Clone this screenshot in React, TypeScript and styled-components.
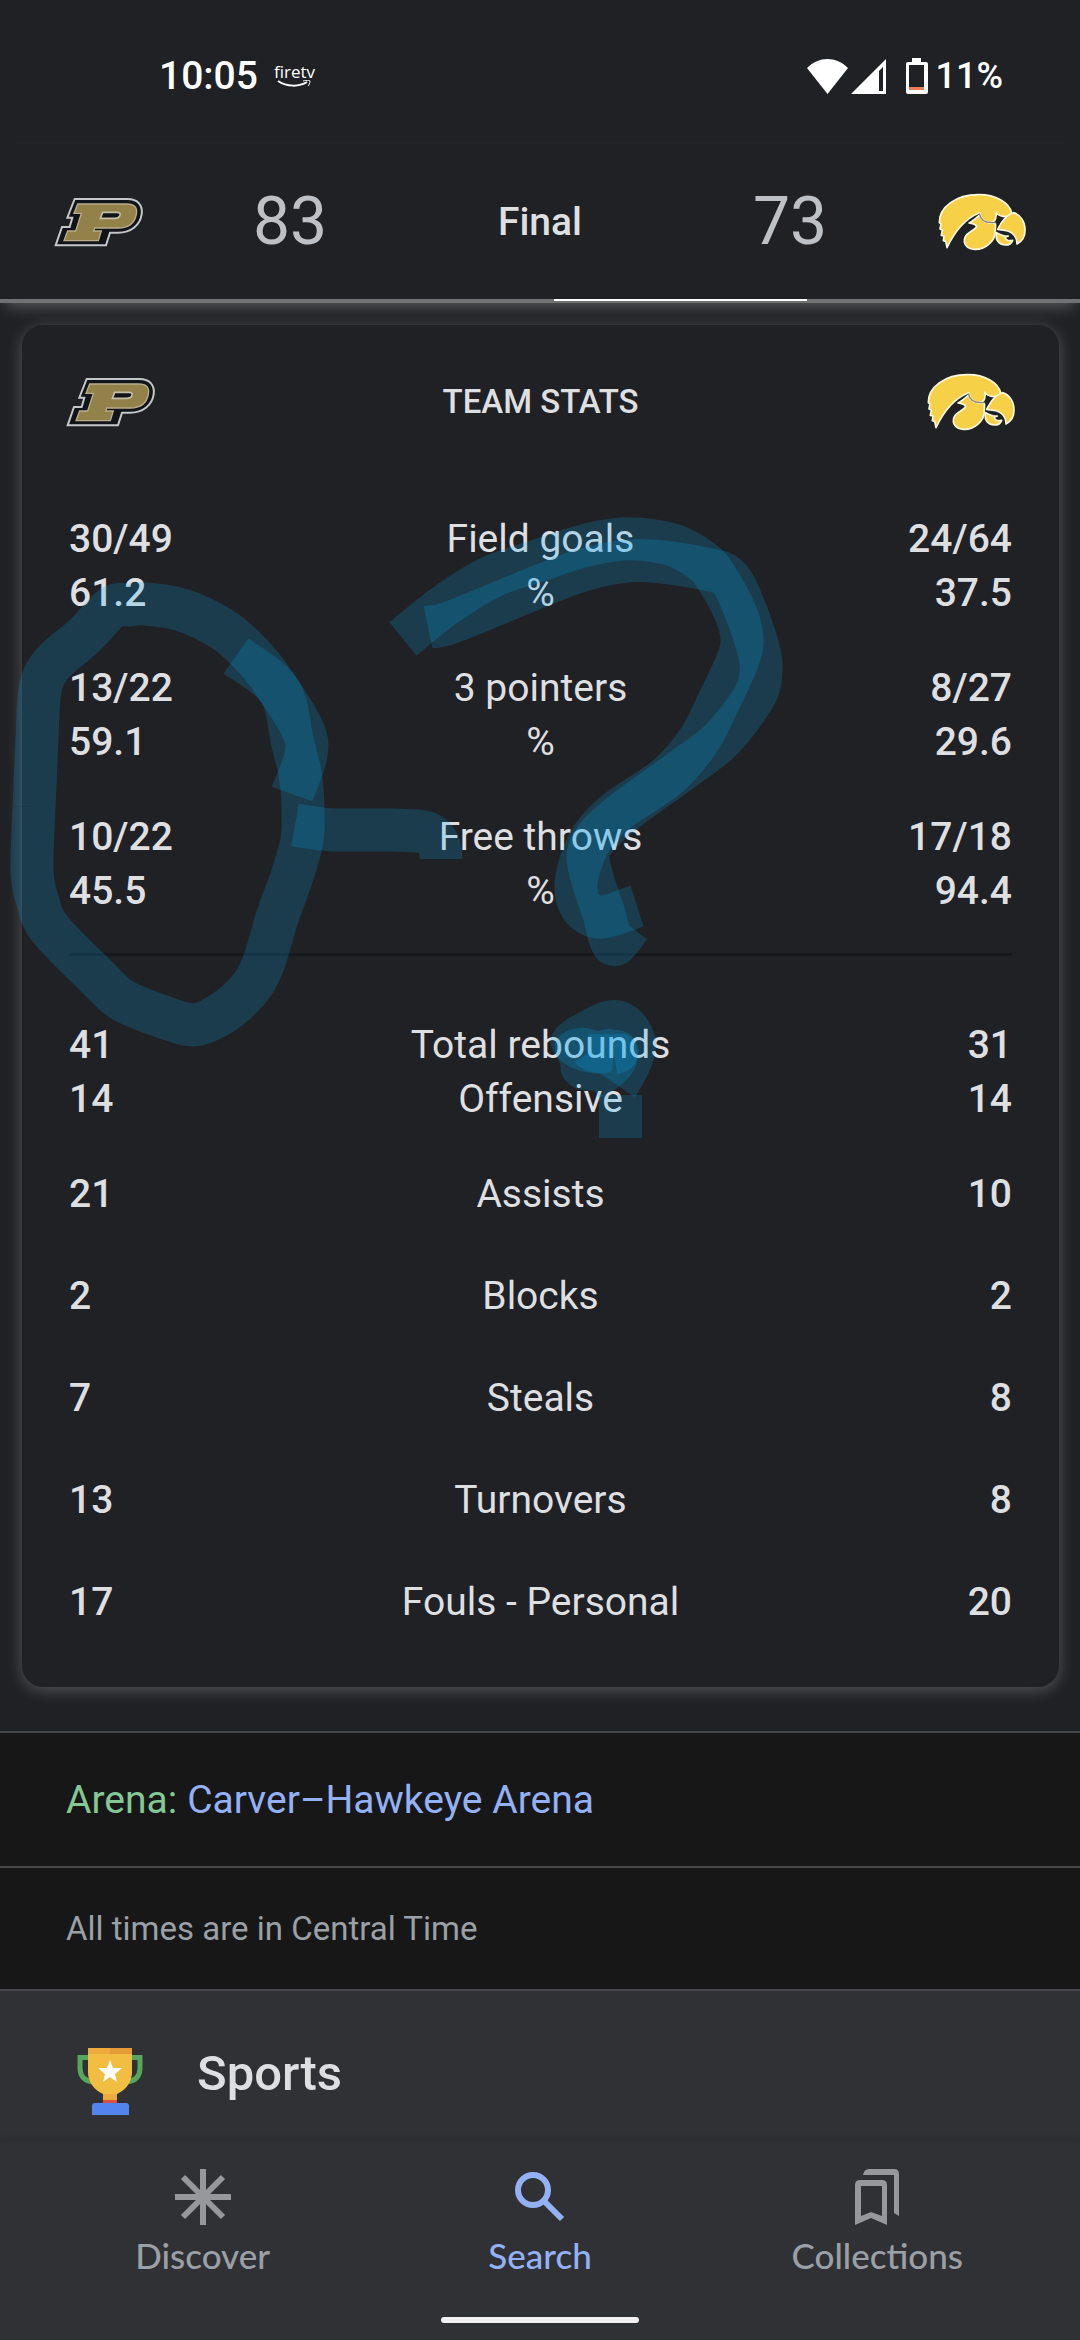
import styled, { createGlobalStyle } from "styled-components";

const colors = {
  background: '#202124',
  surface: '#303134',
  panel: '#171717',
  line: '#48484b',
  divider: '#17181c',
  text: '#dedfe1',
  textScore: '#bdc1c6',
  textMuted: '#9aa0a6',
  link: '#94b1f5',
  label: '#84c995',
  marker: '#03a9f4',
};

type Stat = { home: string[]; name: string[]; away: string[] };

const shooting: Stat[] = [
  { home: ['30/49', '61.2'], name: ['Field goals', '%'], away: ['24/64', '37.5'] },
  { home: ['13/22', '59.1'], name: ['3 pointers', '%'], away: ['8/27', '29.6'] },
  { home: ['10/22', '45.5'], name: ['Free throws', '%'], away: ['17/18', '94.4'] },
];

const totals: Stat[] = [
  { home: ['41', '14'], name: ['Total rebounds', 'Offensive'], away: ['31', '14'] },
  { home: ['21'], name: ['Assists'], away: ['10'] },
  { home: ['2'], name: ['Blocks'], away: ['2'] },
  { home: ['7'], name: ['Steals'], away: ['8'] },
  { home: ['13'], name: ['Turnovers'], away: ['8'] },
  { home: ['17'], name: ['Fouls - Personal'], away: ['20'] },
];

// Marker strokes, as lists of points
type Point = [number, number];

const strokes: Point[][] = [
  // circle, first half
  [[236, 656], [271, 681], [285, 703], [292, 740], [300, 773], [303, 806], [302, 840], [292, 876], [277, 918], [265, 959], [253, 984], [232, 1006], [210, 1020], [193, 1025], [172, 1020], [124, 1001], [97, 977], [50, 929], [38, 902], [32, 872], [34, 807]],
  // circle, second half
  [[34, 807], [37, 740], [40, 690], [52, 664], [84, 636], [112, 607], [128, 605], [146, 604], [182, 610], [222, 629], [250, 653], [272, 680], [302, 728], [306, 755], [292, 794]],
  // question mark
  [[403, 639], [444, 606], [491, 577], [540, 560], [583, 546], [622, 539], [648, 540], [676, 546], [702, 561], [716, 577], [736, 614], [742, 640], [737, 662], [718, 703], [699, 740], [668, 776], [617, 811], [593, 836], [580, 865], [576, 890], [583, 909], [602, 917], [637, 906]],
  [[428, 627], [452, 622], [540, 586], [580, 571], [619, 562], [652, 561], [706, 569], [728, 577], [742, 602], [758, 648], [761, 672], [754, 697], [722, 739], [686, 767], [624, 812], [596, 838], [588, 857], [594, 884], [604, 914], [610, 938], [616, 944], [630, 926]],
];

// Smooth curve that passes through each of the points
function toPath(points: Point[]) {
  let d = `M${points[0][0]} ${points[0][1]}`;
  for (let i = 0; i < points.length - 1; i++) {
    const p0 = points[i - 1] ?? points[i];
    const p1 = points[i];
    const p2 = points[i + 1];
    const p3 = points[i + 2] ?? p2;
    d += `C${p1[0] + (p2[0] - p0[0]) / 6} ${p1[1] + (p2[1] - p0[1]) / 6}`;
    d += ` ${p2[0] - (p3[0] - p1[0]) / 6} ${p2[1] - (p3[1] - p1[1]) / 6} ${p2[0]} ${p2[1]}`;
  }
  return d;
}

function PurdueLogo() {
  return (
    <svg width='96' height='88' viewBox='36 -6 288 264' role='img' aria-label='Purdue'>
      <path d='M110 57H268C300 57 315 76 311 103C306 135 280 158 240 158H216L204 196H53L72 141H95L103 113H88Z' fill='#111418' stroke='#c3c7c9' strokeWidth='6' />
      <path d='M119 72H266C290 72 299 83 295 103C290 130 272 144 240 144H170L167 153H190L181 182H78L89 153H113L130 100H108Z' fill='#92824a' stroke='#b9ad8b' strokeWidth='4' />
      <path d='M194 97H236C247 97 248 102 245 108C243 113 239 115 231 115H187Z' fill='#111418' stroke='#c6bfa8' strokeWidth='5' />
    </svg>
  );
}

function IowaLogo() {
  return (
    <svg width='96' height='88' viewBox='39 -6 288 264' role='img' aria-label='Iowa'>
      <g fill='#f6d148' stroke='#fdf8e0' strokeWidth='5' strokeLinejoin='round'>
        <path d='M78 203L74 184L67 182L69 168L61 166L64 150L57 147L60 132L55 128C54 82 104 44 172 44C224 43 264 68 272 98C270 106 258 111 246 109C236 108 229 104 225 96C227 111 223 122 216 126C201 131 181 124 176 98C130 116 102 152 78 203Z' />
        <path d='M144 129C156 124 166 114 175 106C181 125 200 131 223 129C226 141 221 147 223 157C221 184 193 209 161 208C137 207 125 190 132 172C139 156 158 153 166 142C168 134 158 132 144 129Z' />
        <path d='M230 148C240 126 254 106 277 98C299 104 313 126 312 152C312 171 301 185 288 192C288 172 276 155 252 151Z' />
        <path d='M227 158C222 178 232 195 254 195C264 195 272 189 275 181C262 184 255 180 253 172L262 168C250 170 238 164 227 158Z' />
      </g>
      <path d='M175 100C179 124 196 131 226 127' fill='none' stroke='#858574' strokeWidth='4' />
      <path d='M227 109C233 115 239 114 247 113C242 121 238 126 235 134C231 130 226 130 223 129C229 124 228 117 227 109Z' fill='#202124' />
    </svg>
  );
}

function StatRow({ stat }: { stat: Stat }) {
  const single = stat.name.length === 1;
  return (
    <tr>
      <ValueCell $single={single}>
        {stat.home.map((line, i) => <Line key={i}>{line}</Line>)}
      </ValueCell>
      <NameCell scope='row' $single={single}>
        {stat.name.map((line, i) => <Line key={i}>{line}</Line>)}
      </NameCell>
      <ValueCell $single={single} $right>
        {stat.away.map((line, i) => <Line key={i}>{line}</Line>)}
      </ValueCell>
    </tr>
  );
}

export default function App() {
  return (
    <Page>
      <GlobalStyle />

      {/* Status bar */}
      <StatusBar>
        <Clock>10:05</Clock>
        <FireTv>
          firetv
          <svg width='34' height='8' viewBox='0 0 34 8'>
            <path d='M1 1C10 7 22 7 30 2' fill='none' stroke='#fff' strokeWidth='2' />
            <path d='M26 1C30 0 33 0 33 1C33 3 32 5 31 6' fill='none' stroke='#fff' strokeWidth='1' />
          </svg>
        </FireTv>
        <StatusIcons>
          <svg width='41' height='35' viewBox='0 0 41 35'>
            <path d='M0 9C12-3 29-3 41 9L20.5 35Z' fill='#fff' />
          </svg>
          <svg width='35' height='35' viewBox='0 0 35 35'>
            <path fillRule='evenodd' d='M35 0V35H0ZM32 8L28 12V32H32Z' fill='#fff' />
          </svg>
        </StatusIcons>
        <Battery>
          <svg width='22' height='36' viewBox='0 0 22 36'>
            <path fillRule='evenodd' d='M6 0H15V4H20Q22 4 22 6V34Q22 36 20 36H2Q0 36 0 34V6Q0 4 2 4H6ZM3 7V32H18V7Z' fill='#fff' />
            <path d='M3 29H18V32H3Z' fill='#ee7e59' />
          </svg>
          <BatteryLevel>11%</BatteryLevel>
        </Battery>
      </StatusBar>

      {/* Score */}
      <ScoreHeader>
        <PurdueLogo />
        <Score>83</Score>
        <GameState>Final</GameState>
        <Score>73</Score>
        <IowaLogo />
        <TabIndicator />
      </ScoreHeader>

      {/* Team stats */}
      <Card>
        <CardHeader>
          <PurdueLogo />
          <CardTitle>TEAM STATS</CardTitle>
          <IowaLogo />
        </CardHeader>
        <StatTable>
          <tbody>
            {shooting.map((stat) => <StatRow key={stat.name[0]} stat={stat} />)}
          </tbody>
        </StatTable>
        <Divider />
        <StatTable>
          <tbody>
            {totals.map((stat) => <StatRow key={stat.name[0]} stat={stat} />)}
          </tbody>
        </StatTable>
      </Card>

      {/* Arena and time zone */}
      <ArenaRow>
        <ArenaLabel>Arena:</ArenaLabel>
        <ArenaLink href='#arena'>Carver–Hawkeye Arena</ArenaLink>
      </ArenaRow>
      <TimeZoneRow>All times are in Central Time</TimeZoneRow>

      <SportsRow>
        <svg width='66' height='82' viewBox='0 -15 66 82'>
          <path d='M12 9.500H3V20C3 29 8 33 16 34M54 9.500H63V20C63 29 58 33 50 34' fill='none' stroke='#58a55c' strokeWidth='5' />
          <path d='M11 0H55V24C55 34 49 42 40 46H26C17 42 11 34 11 24Z' fill='#f2be42' />
          <path d='M11 0H33V6H11Z' fill='#eeab3c' />
          <path d='M33 0H55V6H33Z' fill='#e69a38' />
          <path d='M26 46H40V52H26Z' fill='#ecab3d' />
          <path d='M26 52H40V55H26Z' fill='#d85140' />
          <path d='M15 67V58Q15 55 18 55H49Q52 55 52 58V67Z' fill='#5383ec' />
          <path d='M33 12L36 20H45L38 26L40 34L33 29L26 34L28 26L21 20H30Z' fill='#fff' />
        </svg>
        <SportsTitle>Sports</SportsTitle>
      </SportsRow>

      {/* Bottom navigation */}
      <BottomNav>
        <NavButton>
          <svg width='56' height='56' viewBox='0 0 56 56'>
            <path d='M28 0V56M0 28H56M8 8L48 48M48 8L8 48' stroke='#96989c' strokeWidth='6' />
          </svg>
          Discover
        </NavButton>
        <NavButton $active>
          <svg width='56' height='56' viewBox='0 0 56 56'>
            <circle cx='21' cy='21' r='15' fill='none' stroke={colors.link} strokeWidth='6' />
            <path d='M31 31L50 50' stroke={colors.link} strokeWidth='6' />
          </svg>
          Search
        </NavButton>
        <NavButton>
          <svg width='56' height='56' viewBox='0 0 56 56'>
            <path d='M6 56V16Q6 11 11 11H33Q38 11 38 16V56L22 49ZM12 17V47L22 43L33 47V17Z' fill='#96989c' fillRule='evenodd' />
            <path d='M14 6Q15 0 20 0H45Q50 0 50 5V47L45 44V6Z' fill='#96989c' />
          </svg>
          Collections
        </NavButton>
        <HomeHandle />
      </BottomNav>

      {/* Marker drawing on top of the page */}
      <Marker viewBox='0 0 1080 2340' preserveAspectRatio='xMidYMin meet' aria-hidden='true'>
        <g fill='none' stroke={colors.marker} strokeWidth='43' strokeLinejoin='round'>
          {strokes.map((points, i) => (
            <path key={i} d={toPath(points)} strokeOpacity='0.2' />
          ))}
          <path d='M295 825C312 828 325 830 337 830H393L418 831Q441 833 441 859' strokeOpacity='0.2' />
        </g>
        <g fill={colors.marker} fillOpacity='0.2' transform='translate(530 990) scale(0.333)'>
          <path d='M62 160C62 112 110 88 150 66C190 45 215 30 253 30C318 30 365 90 377 145C386 200 352 265 315 322L213 252C150 250 92 225 75 190C68 180 62 172 62 160Z' />
          <path d='M75 165C80 135 115 113 160 113C178 113 190 119 205 123C225 116 240 116 258 119C300 122 320 145 326 180C326 245 290 285 208 325L193 302C130 305 90 275 91 222C80 200 74 185 75 165Z' />
          <path d='M175 132H285C310 140 323 165 323 190C322 225 300 248 262 252L252 190L246 243L228 250C190 250 155 243 133 216L175 190Z' />
        </g>
        <path d='M599 1095H642V1138H599Z' fill={colors.marker} fillOpacity='0.2' />
      </Marker>
    </Page>
  )
}

const GlobalStyle = createGlobalStyle`
  * {
    box-sizing: border-box;
  }
  body {
    margin: 0;
    background: ${colors.background};
    color: ${colors.text};
    font-family: Roboto, sans-serif;
  }
  svg {
    display: block;
    flex-shrink: 0;
  }
`
const Page = styled.div`
  position: relative;
  min-height: 100vh;
  display: flex;
  flex-direction: column;
`

const StatusBar = styled.div`
  display: flex;
  align-items: center;
  height: 144px;
  padding: 8px 77px 0 159px;
  color: #fff;
`
const Clock = styled.span`
  font-size: 39px;
  font-weight: 500;
  line-height: 48px;
`
const BatteryLevel = styled.span`
  font-size: 36px;
  font-weight: 500;
  line-height: 48px;
`
const FireTv = styled.div`
  display: flex;
  flex-direction: column;
  align-items: center;
  margin-left: 16px;
  font-family: 'Open Sans', sans-serif;
  font-size: 17px;
  line-height: 16px;
`
const StatusIcons = styled.div`
  display: flex;
  gap: 3px;
  margin-left: auto;
`
const Battery = styled.div`
  display: flex;
  align-items: center;
  gap: 8px;
  margin-left: 20px;
`

const ScoreHeader = styled.header`
  position: relative;
  display: grid;
  grid-template-columns: 96px 288px 1fr 288px 96px;
  align-items: center;
  height: 159px;
  padding: 0 50px;
  border-bottom: 4px solid #707173;
  box-shadow: 0 8px 16px -6px rgba(255, 255, 255, 0.3);
  text-align: center;
`
const Score = styled.div`
  font-size: 66px;
  line-height: 72px;
  color: ${colors.textScore};
`
const GameState = styled.div`
  font-size: 39px;
  font-weight: 500;
  line-height: 54px;
`
const TabIndicator = styled.div`
  position: absolute;
  left: 554px;
  bottom: -2px;
  width: 253px;
  height: 2px;
  background: #fff;
`

const Card = styled.section`
  margin: 22px 21px 44px 22px;
  padding-bottom: 30px;
  border-radius: 21px;
  background: ${colors.background};
  box-shadow: 0 3px 16px rgba(255, 255, 255, 0.24);
`
const CardHeader = styled.div`
  display: flex;
  align-items: center;
  justify-content: space-between;
  padding: 33px 40px 46px;
`
const CardTitle = styled.h2`
  margin: 0;
  font-size: 33px;
  font-weight: 500;
  line-height: 40px;
`
const StatTable = styled.table`
  width: calc(100% - 94px);
  margin: 0 47px;
  border-collapse: collapse;
  table-layout: fixed;
  font-size: 39px;
  line-height: 54px;
`
const ValueCell = styled.td<{ $single: boolean; $right?: boolean }>`
  width: 25%;
  padding: ${({ $single }) => ($single ? '20px 0 28px' : '20px 0 21px')};
  font-weight: 500;
  text-align: ${({ $right }) => ($right ? 'right' : 'left')};
`
const NameCell = styled.th<{ $single: boolean }>`
  padding: ${({ $single }) => ($single ? '20px 0 28px' : '20px 0 21px')};
  font-weight: 400;
  text-align: center;
`
const Line = styled.div`
  height: 54px;
`
const Divider = styled.hr`
  height: 3px;
  margin: 14px 47px 42px;
  border: 0;
  background: ${colors.divider};
`

const ArenaRow = styled.div`
  display: flex;
  align-items: center;
  gap: 10px;
  height: 135px;
  padding: 0 66px;
  border-top: 2px solid ${colors.line};
  background: ${colors.panel};
  font-size: 39px;
`
const ArenaLabel = styled.span`
  color: ${colors.label};
`
const ArenaLink = styled.a`
  color: ${colors.link};
  text-decoration: none;
`
const TimeZoneRow = styled.div`
  display: flex;
  align-items: center;
  height: 123px;
  padding: 0 66px;
  border-top: 2px solid ${colors.line};
  background: ${colors.panel};
  color: ${colors.textMuted};
  font-size: 33px;
`
const SportsRow = styled.div`
  display: flex;
  align-items: center;
  flex-grow: 1;
  gap: 54px;
  min-height: 153px;
  padding: 14px 77px 0;
  border-top: 2px solid ${colors.line};
  background: ${colors.surface};
`
const SportsTitle = styled.h2`
  margin: 0;
  font-size: 49px;
  font-weight: 500;
  line-height: 56px;
`

const BottomNav = styled.nav`
  position: relative;
  display: grid;
  grid-template-columns: repeat(3, 1fr);
  align-items: start;
  height: 198px;
  padding: 27px 34px 0;
  background: ${colors.surface};
  box-shadow: 0 -4px 6px rgba(32, 33, 30, 0.2);
`
const NavButton = styled.button<{ $active?: boolean }>`
  display: flex;
  flex-direction: column;
  align-items: center;
  gap: 8px;
  padding: 0;
  border: 0;
  background: none;
  color: ${({ $active }) => ($active ? colors.link : colors.textMuted)};
  font-family: Lato, sans-serif;
  font-size: 35px;
  font-weight: 500;
  line-height: 44px;
`
const HomeHandle = styled.div`
  position: absolute;
  left: 50%;
  bottom: 17px;
  width: 198px;
  height: 6px;
  margin-left: -99px;
  border-radius: 3px;
  background: #f1f1f2;
`

const Marker = styled.svg`
  position: absolute;
  top: 0;
  left: 0;
  width: 100%;
  pointer-events: none;
`
